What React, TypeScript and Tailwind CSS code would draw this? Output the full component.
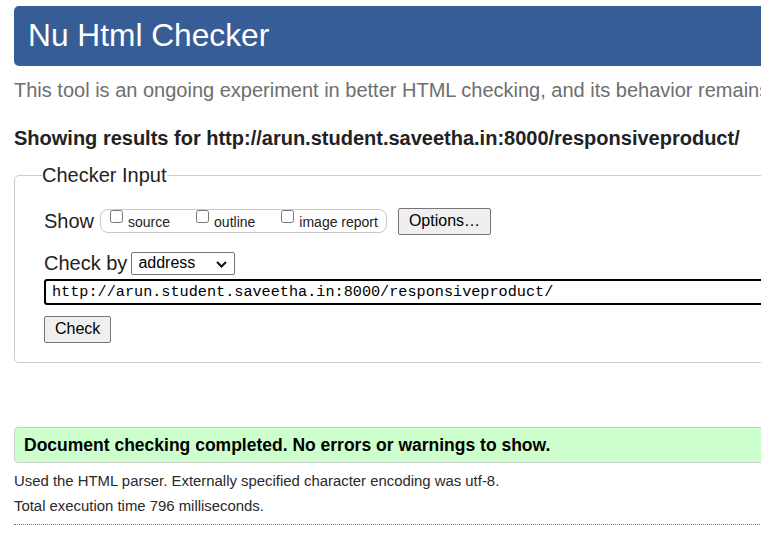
import React from "react";

export default function App() {
  return (
    <div
      className="w-[761px] h-[535px] overflow-hidden bg-white"
      style={{ fontFamily: '"Liberation Sans", Arial, sans-serif' }}
    >
      <div className="w-[1100px] pl-[14px] pt-[6px] text-black">
        <h1 className="h-[60px] rounded-[5px] bg-[#365d95] flex items-center pl-[14px] text-white text-[31.7px] leading-none font-normal">
          Nu Html Checker
        </h1>
        <p className="mt-[12.5px] text-[20px] leading-[23px] text-[#6e6e6e] whitespace-nowrap">
          This tool is an ongoing experiment in better HTML checking, and its behavior remains subject to change
        </p>
        <p className="mt-[25px] text-[20px] leading-[23px] font-bold text-[#222] whitespace-nowrap">
          Showing results for http://arun.student.saveetha.in:8000/responsiveproduct/
        </p>

        <fieldset className="mt-[14px] border border-[#cccccc] rounded-[5px] pl-[29px] pt-[21px] pb-[19px]">
          <legend className="-ml-[2px] text-[20px] leading-[23px] text-[#222]">Checker Input</legend>

          <div className="flex items-center h-[27px]">
            <span className="text-[20px] leading-[23px] text-[#222]">Show</span>
            <div className="ml-[6px] h-[24px] flex items-start border border-[#c8c8c8] rounded-[8px] pl-[9px] pr-[8px] gap-[26px]">
              {["source", "outline", "image report"].map((l) => (
                <label key={l} className="flex items-start">
                  <input type="checkbox" className="m-0 w-[13px] h-[13px]" />
                  <span className="ml-[5px] mt-[3.5px] text-[14px] leading-[16px] text-[#222]">{l}</span>
                </label>
              ))}
            </div>
            <button className="ml-[11px] h-[27px] px-[10px] text-[16px] leading-[18px] bg-[#efefef] border border-[#767676] rounded-[2px] text-black">
              Options…
            </button>
          </div>

          <div className="mt-[17px] flex items-center h-[23px]">
            <span className="text-[20px] leading-[23px] text-[#222]">Check by</span>
            <div className="ml-[4px] relative w-[104px] h-[23px] border border-[#767676] rounded-[2px] bg-white flex items-center pl-[6px]">
              <span className="text-[16px] leading-[18px] text-black">address</span>
              <svg
                className="absolute right-[7px] top-[8px]"
                width="11"
                height="7"
                viewBox="0 0 11 7"
                fill="none"
              >
                <polyline points="1,1 5.5,5.5 10,1" stroke="#111" strokeWidth="2" />
              </svg>
            </div>
          </div>

          <div className="mt-[4px] h-[26px] border-2 border-black rounded-[3px] flex items-center pl-[6px]">
            <span
              className="text-[15.2px] leading-[18px] text-black whitespace-nowrap"
              style={{ fontFamily: '"Liberation Mono", "DejaVu Sans Mono", monospace' }}
            >
              http://arun.student.saveetha.in:8000/responsiveproduct/
            </span>
          </div>

          <div className="mt-[11px]">
            <button className="h-[27px] px-[10px] text-[16px] leading-[18px] bg-[#efefef] border border-[#767676] rounded-[2px] text-black">
              Check
            </button>
          </div>
        </fieldset>

        <div className="mt-[64px] h-[36px] border border-[#cccccc] rounded-[4px] bg-[#ccffcc] flex items-center pl-[9px]">
          <span className="text-[17.5px] leading-[20px] font-bold text-black whitespace-nowrap">
            Document checking completed. No errors or warnings to show.
          </span>
        </div>

        <p className="mt-[6.4px] text-[14.9px] leading-[25px] text-[#2a2a2a]">
          Used the HTML parser. Externally specified character encoding was utf-8.
        </p>
        <p className="text-[14.9px] leading-[25px] text-[#2a2a2a]">Total execution time 796 milliseconds.</p>
        <div className="mt-[5px] border-b border-dotted border-[#777]" />
      </div>
    </div>
  );
}
